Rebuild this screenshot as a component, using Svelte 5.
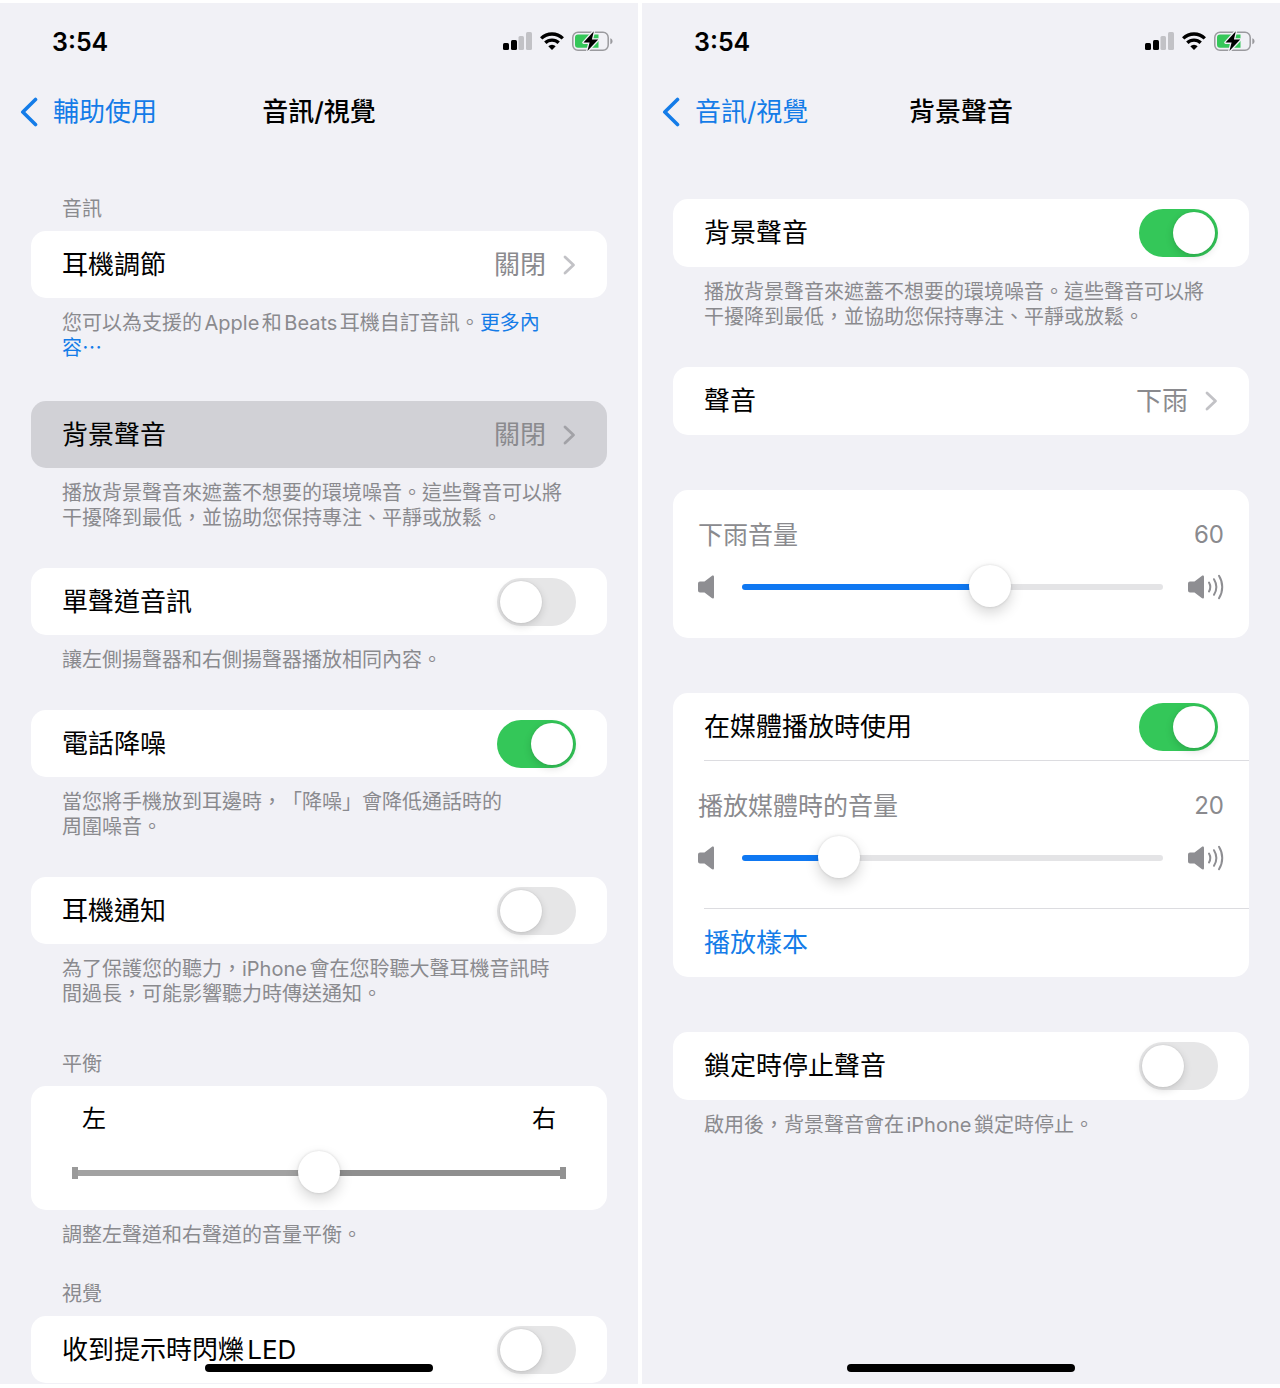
<script>
  let mono = $state(false);
  let noiseCancel = $state(true);
  let headphoneAlert = $state(false);
  let ledFlash = $state(false);
  let background = $state(true);
  let useInMedia = $state(true);
  let stopLocked = $state(false);
  let balance = $state(50);
  let rainVolume = $state(60);
  let mediaVolume = $state(20);
</script>

{#snippet statusBar()}
  <div class="status">
    <span class="time">3:54</span>
    <div class="status-icons">
      <svg width="29" height="20" viewBox="0 0 29 20" aria-hidden="true">
        <rect x="0" y="12" width="6" height="7" rx="1.5" fill="#000" />
        <rect x="8" y="9" width="6" height="10" rx="1.5" fill="#000" />
        <rect x="15.500" y="5" width="5.500" height="14" rx="1.5" fill="#c2c2c6" />
        <rect x="23" y="1" width="6" height="18" rx="1.5" fill="#c2c2c6" />
      </svg>
      <svg width="24" height="20" viewBox="0 0 24 20" aria-hidden="true">
        <g fill="none" stroke="#000" stroke-width="3.3">
          <path d="M1.2 7.4a15.4 15.4 0 0 1 21.6 0" />
          <path d="M5.3 11.8a9.6 9.6 0 0 1 13.4 0" />
        </g>
        <path d="M12 19l-3.700-3.800a5.300 5.300 0 0 1 7.400 0z" fill="#000" />
      </svg>
      <svg width="41" height="22" viewBox="0 0 41 22" aria-hidden="true">
        <rect x="0.8" y="2.2" width="35.4" height="18" rx="5.2" fill="none" stroke="#9a9a9e" stroke-width="1.5" />
        <path d="M6 4.6h20.5v13.2H6a3 3 0 0 1-3-3V7.600a3 3 0 0 1 3-3z" fill="#35c759" />
        <path d="M38.300 8.200c1.600.6 2.200 1.700 2.200 3s-.6 2.400-2.200 3z" fill="#9a9a9e" />
        <path d="M21.800 1.200L11.500 12.600h6.100l-2.200 8.400L26.200 9.500h-6.300z" fill="#000" stroke="#f1f1f6" stroke-width="2.600" paint-order="stroke" stroke-linejoin="round" />
      </svg>
    </div>
  </div>
{/snippet}

{#snippet navBar(back, title)}
  <header class="nav">
    <a class="back" href="#back">
      <svg width="18" height="30" viewBox="0 0 18 30" aria-hidden="true">
        <path d="M15.500 2.500L2.800 15l12.700 12.500" fill="none" stroke="currentColor" stroke-width="3.600" stroke-linecap="round" stroke-linejoin="round" />
      </svg>
      <span>{back}</span>
    </a>
    <h1>{title}</h1>
  </header>
{/snippet}

{#snippet chevron()}
  <svg class="chevron" width="13" height="20" viewBox="0 0 13 20" aria-hidden="true">
    <path d="M2 2l8.500 8L2 18" fill="none" stroke="currentColor" stroke-width="2.800" stroke-linecap="round" stroke-linejoin="round" />
  </svg>
{/snippet}

{#snippet speaker()}
  <svg width="16" height="26" viewBox="0 0 16 26" aria-hidden="true">
    <path d="M2 7.500h4.500l7.200-5.600c1-.8 2.300-.4 2.300.9v20.400c0 1.300-1.300 1.700-2.300.9L6.500 18.500H2a2 2 0 0 1-2-2v-7a2 2 0 0 1 2-2z" fill="#8e8e92" />
  </svg>
{/snippet}

{#snippet speakerLoud()}
  <svg width="36" height="26" viewBox="0 0 36 26" aria-hidden="true">
    <path d="M2 7.500h4.500l7.200-5.600c1-.8 2.300-.4 2.300.9v20.400c0 1.300-1.300 1.700-2.300.9L6.500 18.500H2a2 2 0 0 1-2-2v-7a2 2 0 0 1 2-2z" fill="#8e8e92" />
    <g fill="none" stroke="#8e8e92" stroke-width="2" stroke-linecap="round">
      <path d="M21 8.500a9 9 0 0 1 0 9" />
      <path d="M26 5.200a15 15 0 0 1 0 15.600" />
      <path d="M31 1.800a21 21 0 0 1 0 22.400" />
    </g>
  </svg>
{/snippet}

<main>
  <section class="phone">
    {@render statusBar()}
    {@render navBar('輔助使用', '音訊/視覺')}

    <div class="content">
      <section class="group loose">
        <h2>音訊</h2>
        <div class="card">
          <button class="row"><span>耳機調節</span><span class="value">關閉</span>{@render chevron()}</button>
        </div>
        <p>您可以為支援的Apple和Beats耳機自訂音訊。<a href="#more">更多內<br />容⋯</a></p>
      </section>

      <section class="group">
        <div class="card pressed">
          <button class="row"><span>背景聲音</span><span class="value">關閉</span>{@render chevron()}</button>
        </div>
        <p>播放背景聲音來遮蓋不想要的環境噪音。這些聲音可以將<br />干擾降到最低，並協助您保持專注、平靜或放鬆。</p>
      </section>

      <section class="group">
        <div class="card">
          <label class="row"><span>單聲道音訊</span><input type="checkbox" role="switch" bind:checked={mono} /></label>
        </div>
        <p>讓左側揚聲器和右側揚聲器播放相同內容。</p>
      </section>

      <section class="group">
        <div class="card">
          <label class="row"><span>電話降噪</span><input type="checkbox" role="switch" bind:checked={noiseCancel} /></label>
        </div>
        <p>當您將手機放到耳邊時，「降噪」會降低通話時的<br />周圍噪音。</p>
      </section>

      <section class="group before-heading">
        <div class="card">
          <label class="row"><span>耳機通知</span><input type="checkbox" role="switch" bind:checked={headphoneAlert} /></label>
        </div>
        <p>為了保護您的聽力，iPhone會在您聆聽大聲耳機音訊時<br />間過長，可能影響聽力時傳送通知。</p>
      </section>

      <section class="group tight">
        <h2>平衡</h2>
        <div class="card balance">
          <div class="sides"><span>左</span><span>右</span></div>
          <input class="centered" type="range" min="0" max="100" aria-label="平衡" bind:value={balance} />
        </div>
        <p>調整左聲道和右聲道的音量平衡。</p>
      </section>

      <section class="group last">
        <h2>視覺</h2>
        <div class="card">
          <label class="row"><span>收到提示時閃爍LED</span><input type="checkbox" role="switch" bind:checked={ledFlash} /></label>
        </div>
      </section>
    </div>
    <div class="home"></div>
  </section>

  <section class="phone">
    {@render statusBar()}
    {@render navBar('音訊/視覺', '背景聲音')}

    <div class="content detail">
      <section class="group">
        <div class="card">
          <label class="row"><span>背景聲音</span><input type="checkbox" role="switch" bind:checked={background} /></label>
        </div>
        <p>播放背景聲音來遮蓋不想要的環境噪音。這些聲音可以將<br />干擾降到最低，並協助您保持專注、平靜或放鬆。</p>
      </section>

      <section class="group plain">
        <div class="card">
          <button class="row"><span>聲音</span><span class="value">下雨</span>{@render chevron()}</button>
        </div>
      </section>

      <section class="group plain">
        <div class="card">
          <div class="volume">
            <div class="volume-head"><label for="rain">下雨音量</label><output for="rain">{rainVolume}</output></div>
            <div class="volume-bar">
              {@render speaker()}
              <input id="rain" type="range" min="0" max="100" bind:value={rainVolume} style:--fill="{rainVolume}%" />
              {@render speakerLoud()}
            </div>
          </div>
        </div>
      </section>

      <section class="group plain">
        <div class="card">
          <label class="row"><span>在媒體播放時使用</span><input type="checkbox" role="switch" bind:checked={useInMedia} /></label>
          <hr />
          <div class="volume">
            <div class="volume-head"><label for="media">播放媒體時的音量</label><output for="media">{mediaVolume}</output></div>
            <div class="volume-bar">
              {@render speaker()}
              <input id="media" type="range" min="0" max="100" bind:value={mediaVolume} style:--fill="{mediaVolume}%" />
              {@render speakerLoud()}
            </div>
          </div>
          <hr />
          <button class="row action">播放樣本</button>
        </div>
      </section>

      <section class="group">
        <div class="card">
          <label class="row"><span>鎖定時停止聲音</span><input type="checkbox" role="switch" bind:checked={stopLocked} /></label>
        </div>
        <p>啟用後，背景聲音會在iPhone鎖定時停止。</p>
      </section>
    </div>
    <div class="home"></div>
  </section>
</main>

<style>
  :global(body) {
    background: #fff;
  }

  main {
    --blue: #147ce8;
    --gray: #8a8a8e;
    box-sizing: border-box;
    min-height: 100vh;
    display: flex;
    gap: 4px;
    padding: 3px 0 4px;
    font-family: Inter, "Noto Sans CJK TC", sans-serif;
    font-size: 26px;
    line-height: 36px;
    color: #000;
    text-autospace: normal;
    text-spacing-trim: space-all;
  }

  .phone {
    position: relative;
    flex: 1 1 0;
    min-width: 0;
    display: flex;
    flex-direction: column;
    background: #f1f1f6;
  }

  .status {
    display: flex;
    align-items: center;
    justify-content: space-between;
    height: 78px;
    padding: 0 25px 0 52px;
  }

  .time {
    font-size: 25px;
    font-weight: 600;
  }

  .status-icons {
    display: flex;
    align-items: center;
    gap: 8px;
    padding-bottom: 2px;
  }

  .nav {
    display: grid;
    grid-template-columns: 1fr auto 1fr;
    align-items: center;
    height: 62px;
    padding: 0 20px;
  }

  .back {
    display: flex;
    align-items: center;
    gap: 15px;
    color: var(--blue);
    text-decoration: none;
  }

  h1 {
    margin: 0;
    font-size: 26px;
    font-weight: 500;
  }

  .content {
    padding: 54px 31px 0;
  }

  .detail {
    padding-top: 56px;
  }

  .group {
    margin-bottom: 37px;
  }

  .loose {
    margin-bottom: 40px;
  }

  .before-heading {
    margin-bottom: 45px;
  }

  .tight {
    margin-bottom: 34px;
  }

  .plain {
    margin-bottom: 55px;
  }

  .last {
    margin-bottom: 0;
  }

  h2 {
    margin: 0 31px 9px;
    font-size: 20px;
    font-weight: 400;
    line-height: 25px;
    color: var(--gray);
  }

  p {
    margin: 13px 0 0 31px;
    font-size: 20px;
    line-height: 25px;
    color: var(--gray);
  }

  p a {
    color: var(--blue);
    text-decoration: none;
  }

  .card {
    border-radius: 15px;
    background: #fff;
  }

  .row {
    box-sizing: border-box;
    display: flex;
    align-items: center;
    width: 100%;
    height: 67px;
    padding: 0 31px;
    border: 0;
    background: none;
    font: inherit;
    color: inherit;
    text-align: left;
  }

  .detail .row {
    height: 68px;
  }

  .row span:first-child {
    flex: 1;
  }

  .row .value {
    color: var(--gray);
  }

  .chevron {
    margin-left: 17px;
    color: #c2c2c6;
  }

  .pressed {
    background: #d1d1d6;
  }

  .pressed .chevron {
    color: #a2a2a7;
  }

  .detail .action {
    color: var(--blue);
  }

  hr {
    height: 1px;
    margin: -1px 0 0 31px;
    border: 0;
    background: #dcdce0;
  }

  input[type='checkbox'] {
    appearance: none;
    box-sizing: border-box;
    width: 79px;
    height: 48px;
    margin: 0;
    padding: 3px;
    border-radius: 24px;
    background: #e6e6e7;
  }

  input[type='checkbox']::before {
    content: '';
    display: block;
    width: 42px;
    height: 42px;
    border-radius: 50%;
    background: #fff;
    box-shadow: 0 3px 8px rgba(0, 0, 0, 0.14), 0 0 2px rgba(0, 0, 0, 0.1);
  }

  input[type='checkbox']:checked {
    background: #34c759;
  }

  input[type='checkbox']:checked::before {
    margin-left: auto;
  }

  input[type='range'] {
    appearance: none;
    display: block;
    flex: 1;
    min-width: 0;
    height: 42px;
    margin: 0;
    background: none;
  }

  input[type='range']::-webkit-slider-runnable-track {
    height: 6px;
    border-radius: 3px;
    background: linear-gradient(to right, #0f78f2 var(--fill), #e4e4e6 var(--fill));
  }

  input[type='range']::-webkit-slider-thumb {
    appearance: none;
    width: 42px;
    height: 42px;
    margin-top: -19px;
    border-radius: 50%;
    background: #fff;
    box-shadow: 0 6px 14px rgba(0, 0, 0, 0.16), 0 0 3px rgba(0, 0, 0, 0.14);
  }

  input.centered {
    width: 100%;
  }

  input.centered::-webkit-slider-runnable-track {
    height: 12px;
    border-radius: 0;
    background:
      linear-gradient(#9a9a9a, #9a9a9a) left / 6px 12px no-repeat,
      linear-gradient(#929292, #929292) right / 6px 12px no-repeat,
      linear-gradient(to right, #a2a2a2 50%, #8f8f8f 50%) center / 100% 6px no-repeat;
  }

  input.centered::-webkit-slider-thumb {
    margin-top: -16px;
  }

  .balance {
    padding: 15px 41px 16px;
  }

  .sides {
    display: flex;
    justify-content: space-between;
    margin-bottom: 15px;
    padding: 0 10px;
    font-size: 24px;
  }

  .volume {
    padding: 30px 25px;
  }

  .volume-head {
    display: flex;
    justify-content: space-between;
    margin-bottom: 16px;
    font-size: 25px;
    line-height: 30px;
    color: var(--gray);
  }

  .volume-head output {
    font-size: 24px;
  }

  .volume-bar {
    display: flex;
    align-items: center;
  }

  .volume-bar input {
    margin: 0 25px 0 28px;
  }

  .home {
    position: absolute;
    bottom: 12px;
    left: 50%;
    width: 228px;
    height: 8px;
    margin-left: -114px;
    border-radius: 4px;
    background: #000;
  }
</style>
